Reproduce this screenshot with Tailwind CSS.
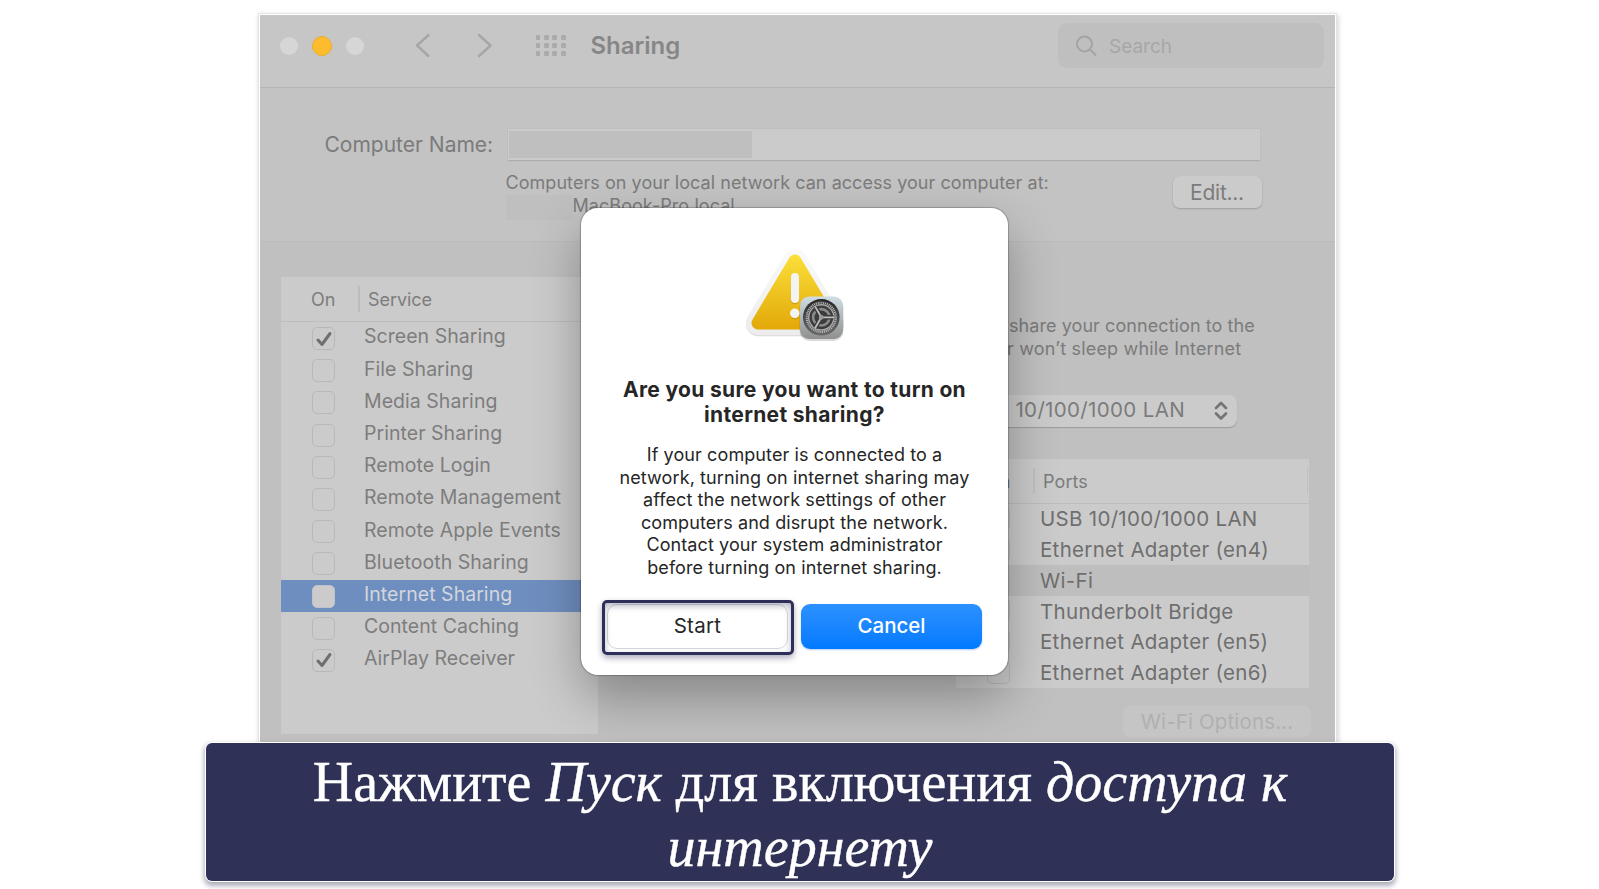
<!DOCTYPE html>
<html lang="ru">
<head>
    <meta charset="UTF-8">
    <meta name="viewport" content="width=device-width, initial-scale=1.0">
    <title>Sharing</title>
    <script src="https://cdn.jsdelivr.net/npm/@tailwindcss/browser@4"></script>
</head>
<body class="bg-white">
    <main class="relative w-[1599px] h-[889px] overflow-hidden pt-[15px] pl-[259.500px] font-['Inter',sans-serif]">

        <!-- Preferences window -->
        <div class="w-[1075.500px] h-[727px] bg-[#c0c0c0] shadow-[0_0_0_1px_#fff,0_0_0_2px_#e3e3e8,1px_2px_5px_2px_rgba(60,60,90,0.25)] overflow-hidden">

            <!-- Toolbar -->
            <header class="flex items-center h-[73px] pb-[11px] pl-5 pr-[11px] bg-[#c6c6c6] border-b border-[#b5b5b5]">
                <div class="flex items-center gap-[14px]">
                    <span class="size-[18px] rounded-full bg-[#d6d6d6]"></span>
                    <span class="size-[20px] rounded-full bg-[#fdbc2e] border border-[#e9af2c]"></span>
                    <span class="size-[18px] rounded-full bg-[#d6d6d6]"></span>
                </div>
                <svg class="ml-[51px] w-[16px] h-[26px]" viewBox="0 0 16 26" fill="none" stroke="#a6a6a6" stroke-width="2.4" stroke-linecap="round" stroke-linejoin="round"><path d="M13.500 2L2 12.500L13.500 23"/></svg>
                <svg class="ml-[46px] w-[16px] h-[26px]" viewBox="0 0 16 26" fill="none" stroke="#a6a6a6" stroke-width="2.400" stroke-linecap="round" stroke-linejoin="round"><path d="M2 2L13.500 12.500L2 23"/></svg>
                <div class="ml-[43px] grid grid-cols-4 gap-x-[3.500px] gap-y-[3.500px] w-[30px]" id="grid"></div>
                <h1 class="ml-[25px] text-[24px] font-semibold tracking-[-0.03px] text-[#868686]">Sharing</h1>
                <div class="ml-auto flex items-center w-[266px] h-[45px] rounded-[9px] bg-[#bfbfbf] pl-[18px]">
                    <svg class="w-[21px] h-[22px]" viewBox="0 0 21 22" fill="none" stroke="#a4a4a4" stroke-width="2" stroke-linecap="round"><circle cx="8.500" cy="9" r="7.500"/><path d="M14 14.500L19.500 20"/></svg>
                    <span class="ml-[12px] pt-[4px] text-[19px] text-[#a7a7a7]">Search</span>
                </div>
            </header>

            <!-- Computer name -->
            <section class="h-[154px] pt-[41px] bg-[#c3c3c3] border-b border-[#bcbcbc]">
                <div class="flex items-center h-[32px]">
                    <label class="w-[248px] pl-[65px] text-[21px] text-[#7b7b7b] whitespace-nowrap">Computer Name:</label>
                    <div class="w-[752px] h-[32px] py-[2px] pl-px bg-[#cbcbcb] border-b border-[#adadad] shadow-[0_0_0_1px_#bebebe]">
                        <div class="w-[243px] h-[27px] bg-[#bfbfbf]"></div>
                    </div>
                </div>
                <div class="flex pl-[246px] pt-[11px]">
                    <div class="w-[667px] text-[18px] leading-[22.500px] tracking-[0.05px] text-[#7b7b7b]">
                        <p>Computers on your local network can access your computer at:</p>
                        <div class="flex">
                            <div class="w-[67px] h-[25px] bg-[#bfbfbf]"></div>
                            <span>MacBook-Pro.local</span>
                        </div>
                    </div>
                    <button class="mt-[4px] w-[89px] h-[32px] rounded-[7px] bg-[#cbcbcb] text-[21px] tracking-[-0.25px] leading-[29px] text-[#7b7b7b] shadow-[0_1px_2px_rgba(0,0,0,0.2)]">Edit...</button>
                </div>
            </section>

            <div class="flex">
                <!-- Services -->
                <section class="ml-[21.500px] mt-[35px] w-[317px] h-[457px] bg-[#cbcbcb] text-[#7d7d7d]">
                    <div class="flex items-center h-[45px] border-b border-[#bdbdbd] text-[18px]">
                        <span class="w-[77px] pl-[30px] pt-px">On</span>
                        <span class="border-l-2 border-[#bcbcbc] h-[26px] pl-[8px] leading-[28px] tracking-[-0.05px]">Service</span>
                    </div>
                    <ul id="services"></ul>
                </section>

                <!-- Internet sharing details -->
                <section class="ml-[358px] mt-[73px] w-[353px] text-[#7b7b7b]">
                    <p class="pl-[53px] text-[18px] leading-[22.500px] tracking-[0.07px] whitespace-nowrap">share your connection to the<br><span class="-ml-[2px] tracking-[0.17px]">r won’t sleep while Internet</span></p>
                    <div class="mt-[35px] w-[281px] h-[32px] flex items-center rounded-[8px] bg-[#cbcbcb] shadow-[0_1px_1px_rgba(0,0,0,0.2)] pl-[13px]">
                        <span class="w-[216px] text-right text-[20.500px] tracking-[0.35px] whitespace-nowrap pb-px">10/100/1000 LAN</span>
                        <svg class="ml-[29px] w-[14px] h-[19px] mb-px" viewBox="0 0 14 19" fill="none" stroke="#747474" stroke-width="2.600" stroke-linecap="round" stroke-linejoin="round"><path d="M2 7L7 2L12 7M2 12.500L7 17.500L12 12.500"/></svg>
                    </div>
                    <div class="mt-[32px] h-[229px] bg-[#cbcbcb]">
                        <div class="flex items-center h-[44.500px] border-b border-[#bdbdbd] text-[18px] pr-[1px]">
                            <span class="w-[77px] pl-[30px] pt-px">On</span>
                            <span class="border-l-2 border-r border-[#c0c0c0] w-[275px] h-[26px] pl-[8px] leading-[28px] tracking-[0.1px]">Ports</span>
                        </div>
                        <ul id="ports"></ul>
                    </div>
                    <button class="block mt-[18px] ml-[167px] w-[188px] h-[31px] rounded-[7px] bg-[#c5c5c5] text-[20.500px] leading-[29px] tracking-[0.15px] text-[#b0b0b0]">Wi-Fi Options...</button>
                </section>
            </div>
        </div>

        <!-- Confirmation dialog -->
        <div class="absolute left-[581px] top-[208px] w-[427px] h-[467px] rounded-[17px] bg-white text-center text-[#262626] shadow-[0_0_1px_1px_rgba(0,0,0,0.22),0_22px_50px_rgba(0,0,0,0.3)]">
            <svg class="mx-auto mt-[36px] w-[110px] h-[100px]" viewBox="740 244 110 100">
                <defs>
                    <linearGradient id="yellow" gradientUnits="userSpaceOnUse" x1="0" y1="254" x2="0" y2="330">
                        <stop offset="0" stop-color="#fbe03a"/>
                        <stop offset="1" stop-color="#e2a808"/>
                    </linearGradient>
                    <linearGradient id="rim" gradientUnits="userSpaceOnUse" x1="0" y1="249" x2="0" y2="336">
                        <stop offset="0" stop-color="#fafafa"/>
                        <stop offset="1" stop-color="#ececec"/>
                    </linearGradient>
                    <linearGradient id="metal" x1="0" y1="0" x2="0" y2="1">
                        <stop offset="0" stop-color="#cfdde3"/>
                        <stop offset="1" stop-color="#8f8f8f"/>
                    </linearGradient>
                    <linearGradient id="well" x1="0" y1="0" x2="0" y2="1">
                        <stop offset="0" stop-color="#262626"/>
                        <stop offset="1" stop-color="#6a6a6a"/>
                    </linearGradient>
                </defs>
                <path d="M795 261.500L758 323H832Z" fill="#d0d0d0" stroke="#d0d0d0" stroke-width="24" stroke-linejoin="round" opacity=".7" transform="translate(0 1.200)"/>
                <path d="M795 261L758 323H832Z" fill="url(#rim)" stroke="url(#rim)" stroke-width="24" stroke-linejoin="round"/>
                <path d="M795 261L758 323H832Z" fill="url(#yellow)" stroke="url(#yellow)" stroke-width="13" stroke-linejoin="round"/>
                <rect x="791" y="274.200" width="8" height="30" rx="4" fill="#b98a10" opacity=".6"/>
                <circle cx="794.800" cy="314.500" r="4.800" fill="#b98a10" opacity=".6"/>
                <rect x="791" y="273" width="8" height="30" rx="4" fill="#f4f4f4"/>
                <circle cx="794.800" cy="313.300" r="4.800" fill="#f4f4f4"/>
                <rect x="799.500" y="297.500" width="44" height="43.500" rx="10" fill="#000" opacity=".15"/>
                <rect x="800" y="296.500" width="43" height="42.500" rx="9" fill="url(#metal)"/>
                <circle cx="821.300" cy="317.300" r="18.300" fill="url(#well)"/>
                <circle cx="821.300" cy="317.300" r="14.600" fill="none" stroke="#b5b5b5" stroke-width="2.200" stroke-dasharray="1.100 .8"/>
                <circle cx="821.300" cy="317.300" r="12.600" fill="#3c3c3c" stroke="#a9a9a9" stroke-width="1.400"/>
                <circle cx="821.300" cy="317.300" r="8.200" fill="none" stroke="#8b8b8b" stroke-width="2.600"/>
                <path d="M821.300 317.300H833.500M821.300 317.300L815.200 306.700M821.300 317.300L815.200 327.900" stroke="#3c3c3c" stroke-width="4.500"/>
                <path d="M821.300 317.300H834M821.300 317.300L815 306.400M821.300 317.300L815 328.200" stroke="#bdbdbd" stroke-width="1.800"/>
                <circle cx="821.300" cy="317.300" r="2.400" fill="#9a9a9a"/>
            </svg>
            <h2 class="mt-[32.500px] text-[21px] font-bold leading-[25.500px] tracking-[0.33px]">Are you sure you want to turn on<br>internet sharing?</h2>
            <p class="mt-[16.500px] text-[18px] leading-[22.540px] tracking-[0.1px]">If your computer is connected to a<br>network, turning on internet sharing may<br>affect the network settings of other<br>computers and disrupt the network.<br>Contact your system administrator<br>before turning on internet sharing.</p>
            <div class="mt-[25px] flex justify-center gap-[13px]">
                <div class="relative">
                    <button class="w-[181px] h-[45px] rounded-[10px] bg-white border border-[#d6d6da] text-[20.500px] tracking-[0.3px]">Start</button>
                    <!-- Highlight frame -->
                    <div class="absolute -left-[5px] -top-[4.500px] w-[192px] h-[55px] rounded-[5px] border-[3.500px] border-[#2e2f58] shadow-[0_3px_6px_rgba(46,47,88,0.4),inset_0_3px_6px_rgba(46,47,88,0.35)]"></div>
                </div>
                <button class="w-[181px] h-[45px] rounded-[9px] bg-linear-to-b from-[#2b91ff] to-[#007aff] text-[20.500px] font-medium text-white shadow-[0_1px_2px_rgba(0,90,220,0.3)]">Cancel</button>
            </div>
        </div>

        <!-- Caption -->
        <div class="absolute left-[206px] top-[743px] w-[1188px] h-[138px] rounded-[6px] bg-[#303156] shadow-[0_0_0_1px_#fff,0_3px_5px_2px_rgba(48,49,86,0.4)] text-center text-white text-[56px] leading-[65px] pt-[7px] font-['Liberation_Serif',serif] [-webkit-text-stroke:0.4px_white]">
            <p>Нажмите <em>Пуск</em> для включения <em>доступа к<br>интернету</em></p>
        </div>
    </main>

    <script>
        // Services list
        const services = [
            ['Screen Sharing', true],
            ['File Sharing'],
            ['Media Sharing'],
            ['Printer Sharing'],
            ['Remote Login'],
            ['Remote Management'],
            ['Remote Apple Events'],
            ['Bluetooth Sharing'],
            ['Internet Sharing'],
            ['Content Caching'],
            ['AirPlay Receiver', true]
        ];
        const check = '<svg class="w-[18px] h-[18px]" viewBox="0 0 18 18" fill="none" stroke="#6f6f6f" stroke-width="3" stroke-linecap="round" stroke-linejoin="round"><path d="M3 10L7 14.500L15 3.500"/></svg>';

        document.getElementById('services').innerHTML = services.map(([name, on]) => {
            const selected = name === 'Internet Sharing';
            return `
                <li class="flex items-center h-[32.200px] ${selected ? 'bg-[#6f8ec0] text-[#d2d6dd]' : ''}">
                    <span class="ml-[31px] mt-px size-[23px] rounded-[5px] border ${selected ? 'bg-[#cbcbcb] border-[#bfc3ca]' : 'border-[#b8b8b8]'} flex items-center justify-center">${on ? check : ''}</span>
                    <span class="ml-[29px] pb-[2px] text-[19.500px] tracking-[0.04px]">${name}</span>
                </li>`;
        }).join('');

        // Ports list
        const ports = ['USB 10/100/1000 LAN', 'Ethernet Adapter (en4)', 'Wi-Fi', 'Thunderbolt Bridge', 'Ethernet Adapter (en5)', 'Ethernet Adapter (en6)'];

        document.getElementById('ports').innerHTML = ports.map(name => `
            <li class="flex items-center h-[30.700px] text-[#6f6f6f] ${name === 'Wi-Fi' ? 'bg-[#bebebe]' : ''}">
                <span class="ml-[31px] size-[23px] rounded-[5px] border border-[#b8b8b8]"></span>
                <span class="ml-[30px] pt-[2px] text-[20.500px] tracking-[0.3px]">${name}</span>
            </li>`).join('');

        // Show-all icon
        document.getElementById('grid').innerHTML = '<i class="h-[4.700px] rounded-[1px] bg-[#aaaaaa]"></i>'.repeat(12);
    </script>
</body>
</html>
